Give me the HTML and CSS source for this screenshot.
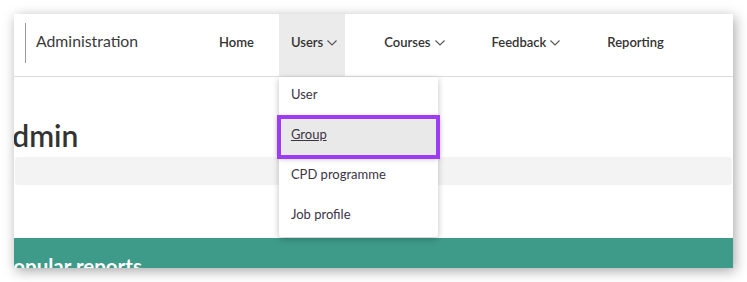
FILE: index.html
```html
<!DOCTYPE html>
<html lang="en">
  <head>
    <meta charset="UTF-8" />
    <title>Administration</title>
    <link rel="stylesheet" href="styles.css">
  </head>
  <body>
    <div class="frame">
      <!-- top navigation -->
      <header class="topbar">
        <div class="brand">Administration</div>
        <ul class="nav">
          <li class="nav-item nav-home">Home</li>
          <li class="nav-item has-menu open">
            Users
            <svg class="caret" width="10" height="6" viewBox="0 0 10 6"><path d="M0.5 0.5L5 5 9.5 0.5" /></svg>
            <ul class="menu">
              <li>User</li>
              <li class="active"><a href="#">Group</a></li>
              <li>CPD programme</li>
              <li>Job profile</li>
            </ul>
          </li>
          <li class="nav-item has-menu">
            Courses
            <svg class="caret" width="10" height="6" viewBox="0 0 10 6"><path d="M0.5 0.5L5 5 9.5 0.5" /></svg>
          </li>
          <li class="nav-item has-menu">
            Feedback
            <svg class="caret" width="10" height="6" viewBox="0 0 10 6"><path d="M0.5 0.5L5 5 9.5 0.5" /></svg>
          </li>
          <li class="nav-item">Reporting</li>
        </ul>
      </header>

      <!-- page body -->
      <main class="content">
        <h1 class="page-title">Admin</h1>
        <div class="breadcrumb"></div>
        <section class="reports">
          <h2>Popular reports</h2>
        </section>
      </main>
    </div>
  </body>
</html>
```

FILE: styles.css
```css
body {
  margin: 0;
  background: #fff;
  font-family: Lato, "Open Sans", sans-serif;
  color: #333;
}
.frame {
  margin: 14px;
  width: 719px;
  height: 254px;
  background: #fff;
  box-shadow: 2px 3px 12px rgba(0, 0, 0, 0.35);
  overflow: hidden;
  position: relative;
}
.topbar {
  display: flex;
  height: 62px;
  border-bottom: 1px solid #dcdcdc;
}
.brand {
  align-self: center;
  margin: 0 0 4px 11px;
  width: 171px;
  height: 40px;
  line-height: 36px;
  border-left: 1px solid #999;
  padding-left: 10px;
  font-size: 15.8px;
  color: #3a3a3a;
}
.nav {
  display: flex;
  gap: 27px;
  list-style: none;
  margin: 0;
  padding: 0;
}
.nav-item {
  position: relative;
  display: flex;
  align-items: center;
  padding: 0 8px 6px 12px;
  font-size: 13px;
  font-weight: 600;
  color: #333;
}
.nav-home {
  padding-right: 0;
  margin-right: -2px;
}
.nav-item.open {
  background: #ebebeb;
}
.caret {
  margin-left: 4px;
  margin-top: 1px;
}
.caret path {
  fill: none;
  stroke: #555;
  stroke-width: 1.1;
}
.menu {
  position: absolute;
  top: 63px;
  left: 0;
  width: 159px;
  margin: 0;
  padding: 0;
  list-style: none;
  background: #fff;
  border-radius: 0 0 3px 3px;
  box-shadow: 0 2px 6px rgba(0, 0, 0, 0.25);
  z-index: 2;
}
.menu li {
  height: 34px;
  line-height: 34px;
  padding: 0 0 6px 12px;
  font-size: 13px;
  font-weight: 400;
  color: #3b3444;
}
.menu li.active {
  background: #e9e9e9;
  outline: 4px solid #9d3cf2;
  outline-offset: -2px;
  box-shadow: 0 1px 6px rgba(0, 0, 0, 0.35);
}
.menu li a {
  color: #3b3444;
}
.content {
  overflow: hidden;
}
.page-title {
  margin: 38px 0 2px -22px;
  height: 40px;
  line-height: 40px;
  font-size: 30px;
  font-weight: 600;
  color: #333;
}
.breadcrumb {
  margin-left: 1px;
  width: 717px;
  height: 28px;
  background: #f3f3f3;
  border-radius: 4px;
}
.reports {
  margin-top: 53px;
  height: 60px;
  background: #3e9b8a;
  padding-top: 16px;
}
.reports h2 {
  margin: 0 0 0 -13px;
  line-height: 24px;
  font-size: 20.5px;
  font-weight: 700;
  color: #fff;
}
```
